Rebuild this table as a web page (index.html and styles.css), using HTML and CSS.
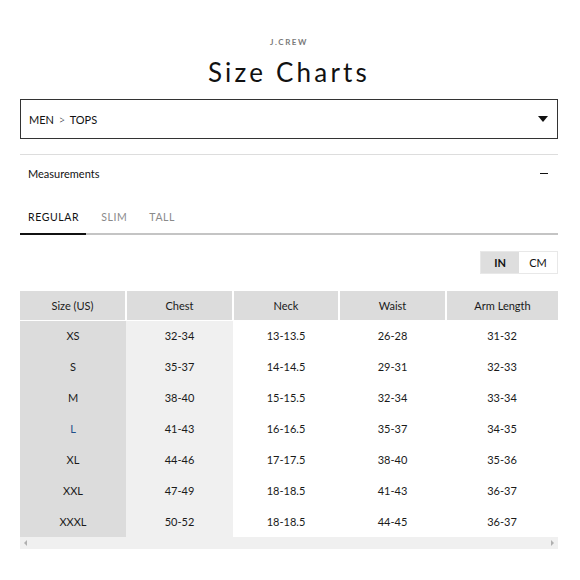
FILE: index.html
```html
<!DOCTYPE html>
<html>
<head>
<meta charset="utf-8">
<link rel="stylesheet" href="styles.css">
</head>
<body>
<div class="page">
  <div class="brand">J.CREW</div>
  <h1 class="title">Size Charts</h1>
  <div class="select">
    <span>MEN <span class="chev">&gt;</span> TOPS</span>
    <svg class="caret" width="10" height="6" viewBox="0 0 10 6"><path d="M0 0H10L5 6Z" fill="#111"/></svg>
  </div>
  <div class="section-head">
    <span>Measurements</span>
    <span class="minus"></span>
  </div>
  <div class="tabs">
    <span class="tab active">REGULAR</span>
    <span class="tab">SLIM</span>
    <span class="tab">TALL</span>
  </div>
  <div class="tabline"><span class="tabline-active"></span></div>
  <div class="units">
    <div class="toggle">
      <span class="unit on">IN</span>
      <span class="unit">CM</span>
    </div>
  </div>
  <div class="table-wrap">
    <table class="chart">
      <colgroup>
        <col class="c1"><col class="c2"><col class="c3"><col class="c4"><col class="c5">
      </colgroup>
      <thead>
        <tr><th>Size (US)</th><th>Chest</th><th>Neck</th><th>Waist</th><th>Arm Length</th></tr>
      </thead>
      <tbody>
        <tr><td>XS</td><td>32-34</td><td>13-13.5</td><td>26-28</td><td>31-32</td></tr>
        <tr><td>S</td><td>35-37</td><td>14-14.5</td><td>29-31</td><td>32-33</td></tr>
        <tr><td>M</td><td>38-40</td><td>15-15.5</td><td>32-34</td><td>33-34</td></tr>
        <tr><td class="blue">L</td><td>41-43</td><td>16-16.5</td><td>35-37</td><td>34-35</td></tr>
        <tr><td>XL</td><td>44-46</td><td>17-17.5</td><td>38-40</td><td>35-36</td></tr>
        <tr><td>XXL</td><td>47-49</td><td>18-18.5</td><td>41-43</td><td>36-37</td></tr>
        <tr><td>XXXL</td><td>50-52</td><td>18-18.5</td><td>44-45</td><td>36-37</td></tr>
      </tbody>
    </table>
    <div class="scrollbar">
      <span class="arrow left"></span>
      <span class="arrow right"></span>
    </div>
  </div>
</div>
</body>
</html>
```
FILE: styles.css
```css
* { box-sizing: border-box; }
html, body { margin: 0; padding: 0; background: #fff; }
body {
  font-family: Lato, "Open Sans", sans-serif;
  color: #1a1a1a;
}
.page {
  margin: 0 22px 0 20px;
  padding-top: 36px;
}
.brand {
  text-align: center;
  font-size: 8px;
  letter-spacing: 1.6px;
  color: #7a7a7a;
  line-height: 12px;
  font-weight: 700;
}
.title {
  margin: 9px 0 0;
  text-align: center;
  font-size: 26px;
  font-weight: 400;
  letter-spacing: 3.2px;
  line-height: 30px;
  color: #111;
}
.select {
  margin-top: 12px;
  height: 40px;
  border: 1px solid #333;
  display: flex;
  align-items: center;
  justify-content: space-between;
  padding: 0 9px 0 8px;
  font-size: 11px;
  color: #111;
}
.chev { display: inline-block; margin: 0 2px; font-weight: 300; }
.caret { display: block; }
.section-head {
  margin-top: 15px;
  border-top: 1px solid #ddd;
  height: 38px;
  display: flex;
  align-items: center;
  justify-content: space-between;
  padding: 0 8px;
  font-size: 11px;
  color: #111;
}
.minus {
  display: block;
  width: 8px;
  height: 1px;
  background: #111;
  margin-right: 2px;
}
.tabs {
  margin-top: 9px;
  display: flex;
  height: 32px;
  align-items: center;
  padding-left: 8px;
}
.tab {
  font-size: 10.5px;
  letter-spacing: 0.6px;
  color: #8a8a8a;
  margin-right: 22px;
}
.tab.active { color: #111; }
.tabline {
  height: 2px;
  background: #c4c4c4;
  display: flex;
}
.tabline-active {
  width: 66px;
  background: #111;
}
.units {
  display: flex;
  justify-content: flex-end;
  margin-top: 16px;
}
.toggle {
  display: flex;
  height: 23px;
  border: 1px solid #e8e8e8;
}
.unit {
  width: 38px;
  display: flex;
  align-items: center;
  justify-content: center;
  font-size: 11px;
  color: #111;
}
.unit.on {
  background: #dedede;
  font-weight: 700;
}
.table-wrap {
  margin-top: 17px;
}
.chart {
  width: 100%;
  table-layout: fixed;
  border-collapse: collapse;
  font-size: 11px;
  color: #1a1a1a;
}
.c1 { width: 106px; }
.c2 { width: 107px; }
.c3 { width: 106px; }
.c4 { width: 107px; }
.c5 { width: 112px; }
.chart th {
  background: #dcdcdc;
  font-weight: 400;
  height: 29px;
  border-left: 2px solid #fff;
  border-bottom: 1px solid #fff;
  text-align: center;
  padding: 0;
}
.chart th:first-child { border-left: none; }
.chart td {
  height: 31px;
  text-align: center;
  padding: 0;
}
.chart td:nth-child(1) { background: #dcdcdc; }
.chart td:nth-child(2) { background: #f0f0f0; }
.chart td.blue { color: #1f4f8a; }
.scrollbar {
  height: 12px;
  background: #f0f0f0;
  display: flex;
  align-items: center;
  justify-content: space-between;
  padding: 0 4px;
}
.arrow {
  width: 0;
  height: 0;
  border-top: 3px solid transparent;
  border-bottom: 3px solid transparent;
}
.arrow.left { border-right: 3px solid #b0b0b0; }
.arrow.right { border-left: 3px solid #b0b0b0; }
```
